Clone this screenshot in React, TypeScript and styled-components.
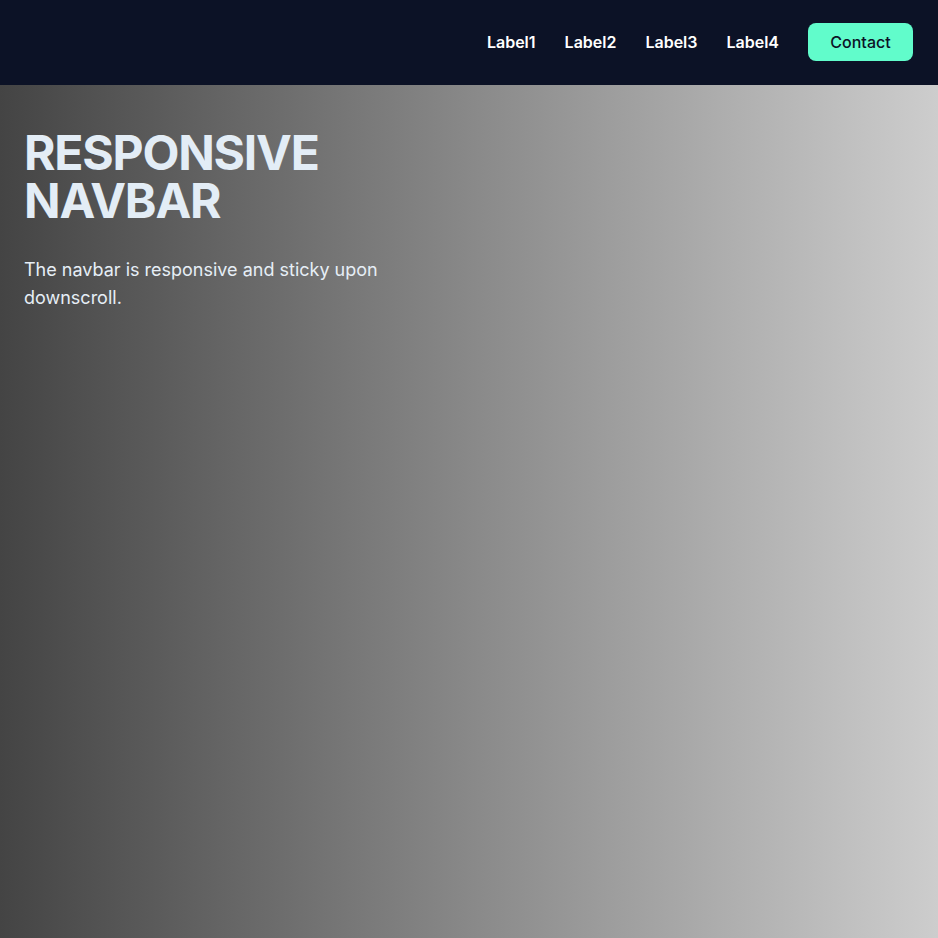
import React from "react";
import styled, { createGlobalStyle } from "styled-components";

const Global = createGlobalStyle`
  html, body { margin: 0; padding: 0; }
  body { font-family: Inter, "Noto Sans", sans-serif; }
  * { box-sizing: border-box; }
`;

const Page = styled.div`
  min-height: 938px;
  display: flex;
  flex-direction: column;
  background: linear-gradient(to right, #444444, #cdcdcd);
`;

const Nav = styled.nav`
  height: 85px;
  background: #0c1226;
  display: flex;
  align-items: center;
  justify-content: flex-end;
  padding: 0 25px 1px;
  gap: 29px;
`;

const NavLink = styled.a`
  color: #ffffff;
  font-size: 16px;
  font-weight: 600;
  text-decoration: none;
`;

const ContactButton = styled.button`
  height: 38px;
  width: 105px;
  border: none;
  border-radius: 8px;
  background: #61fccb;
  color: #0c1226;
  font-family: Inter, "Noto Sans", sans-serif;
  font-size: 16px;
  font-weight: 500;
  cursor: pointer;
`;

const Hero = styled.section`
  padding: 44px 24px;
  max-width: 440px;
`;

const Title = styled.h1`
  margin: 0;
  font-size: 48px;
  line-height: 48px;
  font-weight: 700;
  letter-spacing: -1.2px;
  color: #e3edf6;
`;

const Text = styled.p`
  margin: 31px 0 0;
  font-size: 18px;
  line-height: 28px;
  color: #e6eef6;
`;

export default function App() {
  return (
    <>
      <Global />
      <Page>
        <Nav>
          <NavLink href="#">Label1</NavLink>
          <NavLink href="#">Label2</NavLink>
          <NavLink href="#">Label3</NavLink>
          <NavLink href="#">Label4</NavLink>
          <ContactButton>Contact</ContactButton>
        </Nav>
        <Hero>
          <Title>RESPONSIVE NAVBAR</Title>
          <Text>The navbar is responsive and sticky upon downscroll.</Text>
        </Hero>
      </Page>
    </>
  );
}
